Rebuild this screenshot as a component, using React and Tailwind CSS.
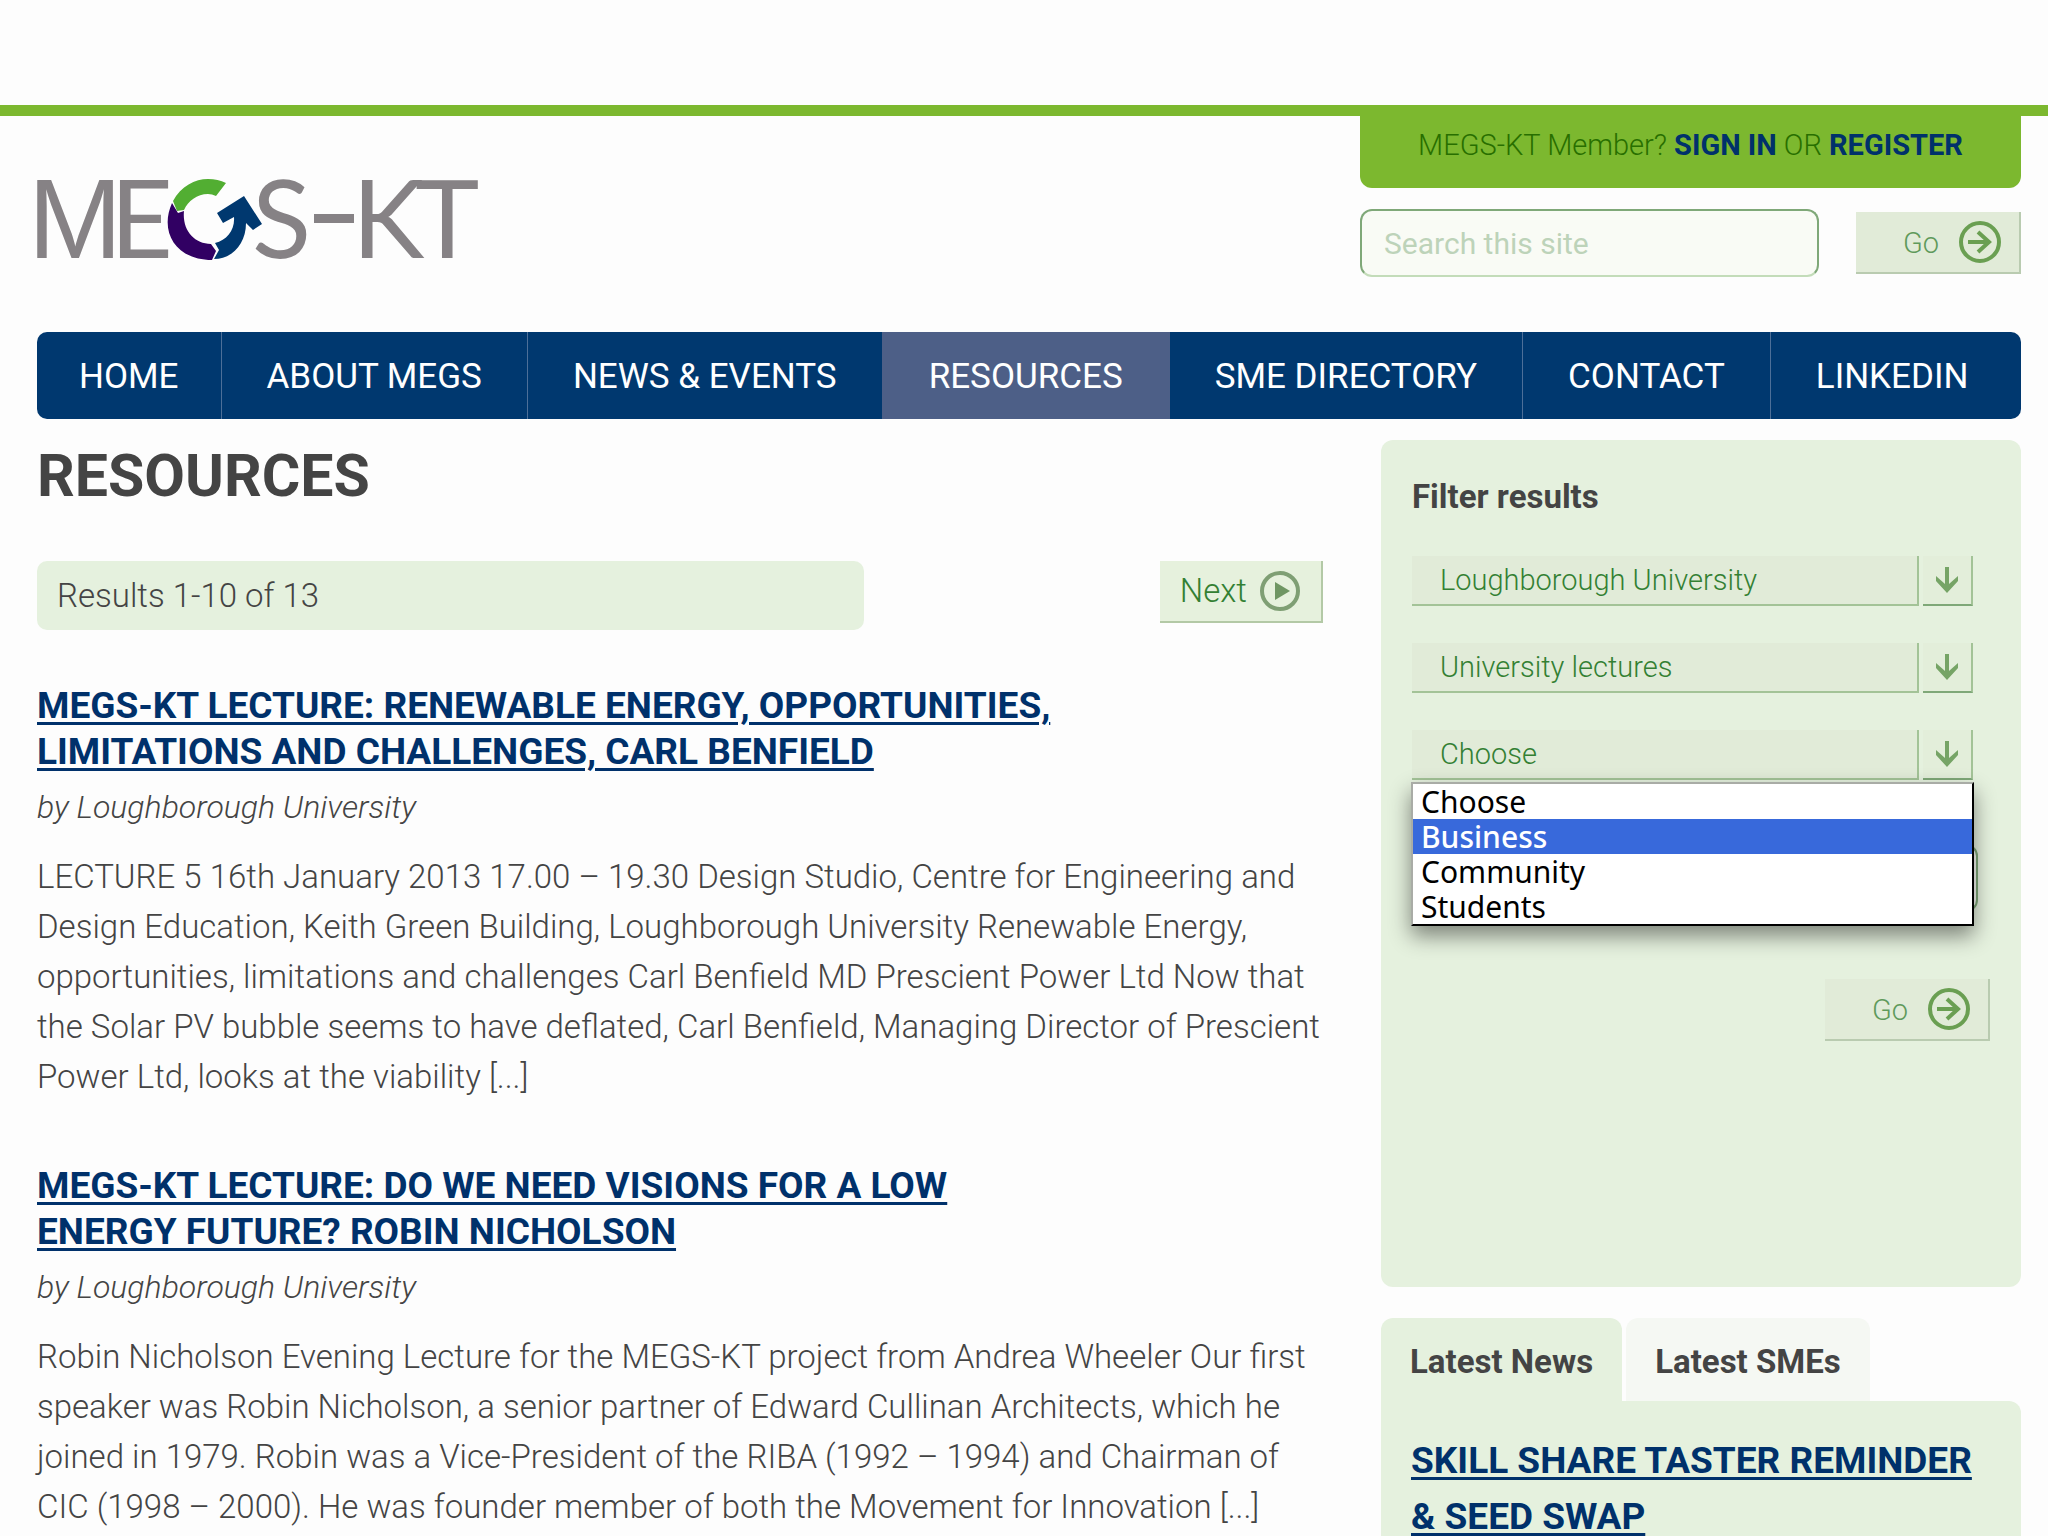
import { useState } from 'react';

const NAV = ['HOME', 'ABOUT MEGS', 'NEWS & EVENTS', 'RESOURCES', 'SME DIRECTORY', 'CONTACT', 'LINKEDIN'];

const ARTICLES = [
  {
    title: 'MEGS-KT LECTURE: RENEWABLE ENERGY, OPPORTUNITIES, LIMITATIONS AND CHALLENGES, CARL BENFIELD',
    by: 'by Loughborough University',
    text: 'LECTURE 5 16th January 2013 17.00 – 19.30 Design Studio, Centre for Engineering and Design Education, Keith Green Building, Loughborough University Renewable Energy, opportunities, limitations and challenges Carl Benfield MD Prescient Power Ltd Now that the Solar PV bubble seems to have deflated, Carl Benfield, Managing Director of Prescient Power Ltd, looks at the viability [...]',
  },
  {
    title: 'MEGS-KT LECTURE: DO WE NEED VISIONS FOR A LOW ENERGY FUTURE? ROBIN NICHOLSON',
    by: 'by Loughborough University',
    text: 'Robin Nicholson Evening Lecture for the MEGS-KT project from Andrea Wheeler Our first speaker was Robin Nicholson, a senior partner of Edward Cullinan Architects, which he joined in 1979. Robin was a Vice-President of the RIBA (1992 – 1994) and Chairman of CIC (1998 – 2000). He was founder member of both the Movement for Innovation [...]',
  },
];

const AUDIENCES = ['Choose', 'Business', 'Community', 'Students'];

function Logo() {
  return (
    <svg width="468" height="140" viewBox="-12 -30 468 140" role="img" aria-label="MEGS-KT">
      <g fill="#868285" fontFamily="Lato, sans-serif" fontSize="109">
        <text x="-9" y="80" fontFamily="Liberation Sans, sans-serif" fontSize="113">M</text>
        <text x="73" y="80">E</text>
        <text x="215" y="80">S</text>
        <text x="315" y="80">K</text>
        <text x="378" y="80">T</text>
      </g>
      <rect x="277" y="36" width="40" height="9" fill="#868285" />
      {/* Recycling G: green top, purple left, blue arrow */}
      <path d="M136 23C144 8 158 1 171 1Q181 1 189 5L179 18Q175 16 171 16C160 16 151 23 147 32L140 33Z" fill="#52ae32" />
      <path d="M135 25L141 35L147 33C145 52 157 66 174 66L179 73L175 82C139 82 122 54 135 25Z" fill="#310063" />
      <path d="M178 65C190 62 198 52 197 39L186 45L180 35L207 18L225 46L216 52L209 45C209 66 195 81 177 81L182 72Z" fill="#00386f" />
    </svg>
  );
}

function CircleArrow() {
  return (
    <svg width="42" height="42" viewBox="0 0 42 42" fill="none" stroke="#6a9f52" aria-hidden="true">
      <circle cx="21" cy="21" r="19" strokeWidth="4" />
      <path d="M9 21H30M19 11L30 21L19 31" strokeWidth="4" />
    </svg>
  );
}

function CirclePlay() {
  return (
    <svg width="42" height="42" viewBox="0 0 42 42" aria-hidden="true">
      <circle cx="21" cy="21" r="18" fill="none" stroke="#7f9f74" strokeWidth="4" />
      <path d="M16 12L31 21L16 30Z" fill="#6f9663" />
    </svg>
  );
}

function GoButton() {
  return (
    <button
      type="submit"
      className="flex h-[62px] w-[165px] items-center justify-end gap-5 border-r-2 border-b-2 border-[#b9cbb0] bg-[#e1ebd8] pr-[18px] text-[29px] font-light text-[#5f9a5b]"
    >
      <span className="pt-1">Go</span> <CircleArrow />
    </button>
  );
}

function FilterSelect({ id, label, options, children }) {
  return (
    <div className="relative flex gap-1">
      <label htmlFor={id} className="sr-only">{label}</label>
      <select
        id={id}
        className="h-[50px] min-w-0 flex-1 appearance-none border-r-2 border-b-2 border-[#a3c397] bg-[#e1ebd8] pl-7 text-[29px] leading-[46px] font-light text-[#338033] outline-none"
      >
        {options.map((o) => (
          <option key={o}>{o}</option>
        ))}
      </select>
      <span className="flex h-[50px] w-[50px] items-center justify-center border-r-2 border-b-2 border-r-[#a3c397] border-b-[#7fa878] bg-[#e3eeda]">
        <svg width="22" height="26" viewBox="0 0 22 26" fill="#76a466" aria-hidden="true">
          <path d="M9 0H13V17L22 9V14L11 26L0 14V9L9 17Z" />
        </svg>
      </span>
      {children}
    </div>
  );
}

export default function App() {
  const [highlighted, setHighlighted] = useState('Business');

  return (
    <div className="flex min-h-screen flex-col bg-[#fdfdfd] pt-[105px] font-['Roboto',sans-serif] text-[#444444]">
      <div className="h-[11px] bg-[#7cb82f]" />

      <header className="flex items-start justify-between pr-[27px] pl-[25px]">
        <a href="#" className="mt-8 block">
          <Logo />
        </a>
        <div className="w-[661px]">
          <p className="h-[72px] rounded-b-xl bg-[#7cb82f] pt-3 text-center text-[29px] leading-[34px] font-light text-[#286f00]">
            MEGS-KT Member? <a href="#" className="font-bold text-[#00316b]">SIGN IN</a> OR{' '}
            <a href="#" className="font-bold text-[#00316b]">REGISTER</a>
          </p>
          <form className="mt-[21px] flex items-center justify-between" onSubmit={(e) => e.preventDefault()}>
            <input
              type="search"
              aria-label="Search this site"
              placeholder="Search this site"
              className="h-[68px] w-[459px] rounded-xl border-2 border-[#7fa878] border-b-[#c3dcb9] bg-[#f9fbf5] px-[22px] text-[30px] placeholder:text-[#bdd3b9]"
            />
            <GoButton />
          </form>
        </div>
      </header>

      <nav className="mt-11 mr-[27px] ml-[37px] flex h-[87px] overflow-hidden rounded-[10px] bg-[#00386f]">
        {NAV.map((item) => (
          <a
            key={item}
            href="#"
            className={
              item === 'RESOURCES'
                ? 'flex items-center bg-[#4d5f87] px-[47px] pt-1 text-[35px] text-white'
                : 'flex items-center border-r border-[#4d6f98] px-[45px] pt-1 text-[35px] text-white first:px-[42px] last:border-r-0 nth-3:border-r-0'
            }
          >
            {item}
          </a>
        ))}
      </nav>

      <div className="flex flex-1 items-stretch justify-between gap-[54px] pr-[27px] pl-[37px]">
        <main className="min-w-0 flex-1">
          <h1 className="mt-[22px] text-[59px] leading-[70px] font-bold">RESOURCES</h1>

          <div className="mt-[50px] flex items-start justify-between pr-1">
            <p className="h-[69px] w-[827px] rounded-[10px] bg-[#e5f1de] pl-5 text-[33px] leading-[69px] font-light">
              Results 1-10 of 13
            </p>
            <button
              type="button"
              className="flex h-[62px] items-center gap-3 border-r-2 border-b-2 border-[#b3c9a6] bg-[#e6f1dd] px-5 text-[33px] font-light text-[#338033]"
            >
              Next <CirclePlay />
            </button>
          </div>

          <div className="mt-[53px] space-y-[61px]">
            {ARTICLES.map((a) => (
              <article key={a.title}>
                <h2 className="w-4/5 text-[37px] leading-[46px] font-bold">
                  <a href="#" className="text-[#00316b] underline decoration-3 underline-offset-4">{a.title}</a>
                </h2>
                <p className="mt-[7px] text-[32px] leading-[50px] font-light italic">{a.by}</p>
                <p className="mt-5 text-[33px] leading-[50px] font-light">{a.text}</p>
              </article>
            ))}
          </div>
        </main>

        <aside className="mt-[21px] flex w-[640px] flex-col">
          <form
            className="h-[847px] rounded-xl bg-[#e5f1de] px-[31px] pt-8"
            onSubmit={(e) => e.preventDefault()}
          >
            <h2 className="text-[33px] leading-[50px] font-bold">Filter results</h2>
            <div className="mt-[34px] mr-[17px] space-y-[37px]">
              <FilterSelect id="partner" label="University" options={['Loughborough University']} />
              <FilterSelect id="kind" label="Resource type" options={['University lectures']} />
              <FilterSelect id="audience" label="Audience" options={AUDIENCES}>
                <ul
                  role="listbox"
                  aria-label="Audience"
                  className="absolute top-[52px] -right-px -left-px z-10 border-2 border-[#a9aca6] border-r-black border-b-black bg-white font-['Noto_Sans','Open_Sans',sans-serif] text-[30px] leading-[35px] text-black shadow-[0_10px_20px_rgba(0,0,0,0.45)]"
                >
                  {AUDIENCES.map((o) => (
                    <li
                      key={o}
                      role="option"
                      aria-selected={o === highlighted}
                      onMouseEnter={() => setHighlighted(o)}
                      className={o === highlighted ? 'bg-[#3869db] pl-2 font-medium text-white' : 'pl-2'}
                    >
                      {o}
                    </li>
                  ))}
                </ul>
              </FilterSelect>
            </div>
            <input
              type="text"
              aria-label="Keywords"
              className="mt-[64px] h-[68px] w-[566px] rounded-xl border-2 border-[#7fa878] bg-[#f9fbf5]"
            />
            <div className="mt-[67px] flex justify-end">
              <GoButton />
            </div>
          </form>

          <div role="tablist" className="mt-[31px] flex h-[83px] gap-1 text-[33px] font-bold">
            <button type="button" role="tab" aria-selected="true" className="rounded-t-xl bg-[#e5f1de] px-[29px] pt-1">
              Latest News
            </button>
            <button type="button" role="tab" aria-selected="false" className="rounded-t-xl bg-[#f5f8f3] px-[29px] pt-1">
              Latest SMEs
            </button>
          </div>
          <section className="flex-1 rounded-tr-xl bg-[#e5f1de] px-[30px] pt-8">
            <h2 className="text-[37px] leading-[56px] font-bold">
              <a href="#" className="text-[#00316b] underline decoration-3 underline-offset-4">
                SKILL SHARE TASTER REMINDER &amp; SEED SWAP
              </a>
            </h2>
          </section>
        </aside>
      </div>
    </div>
  );
}
